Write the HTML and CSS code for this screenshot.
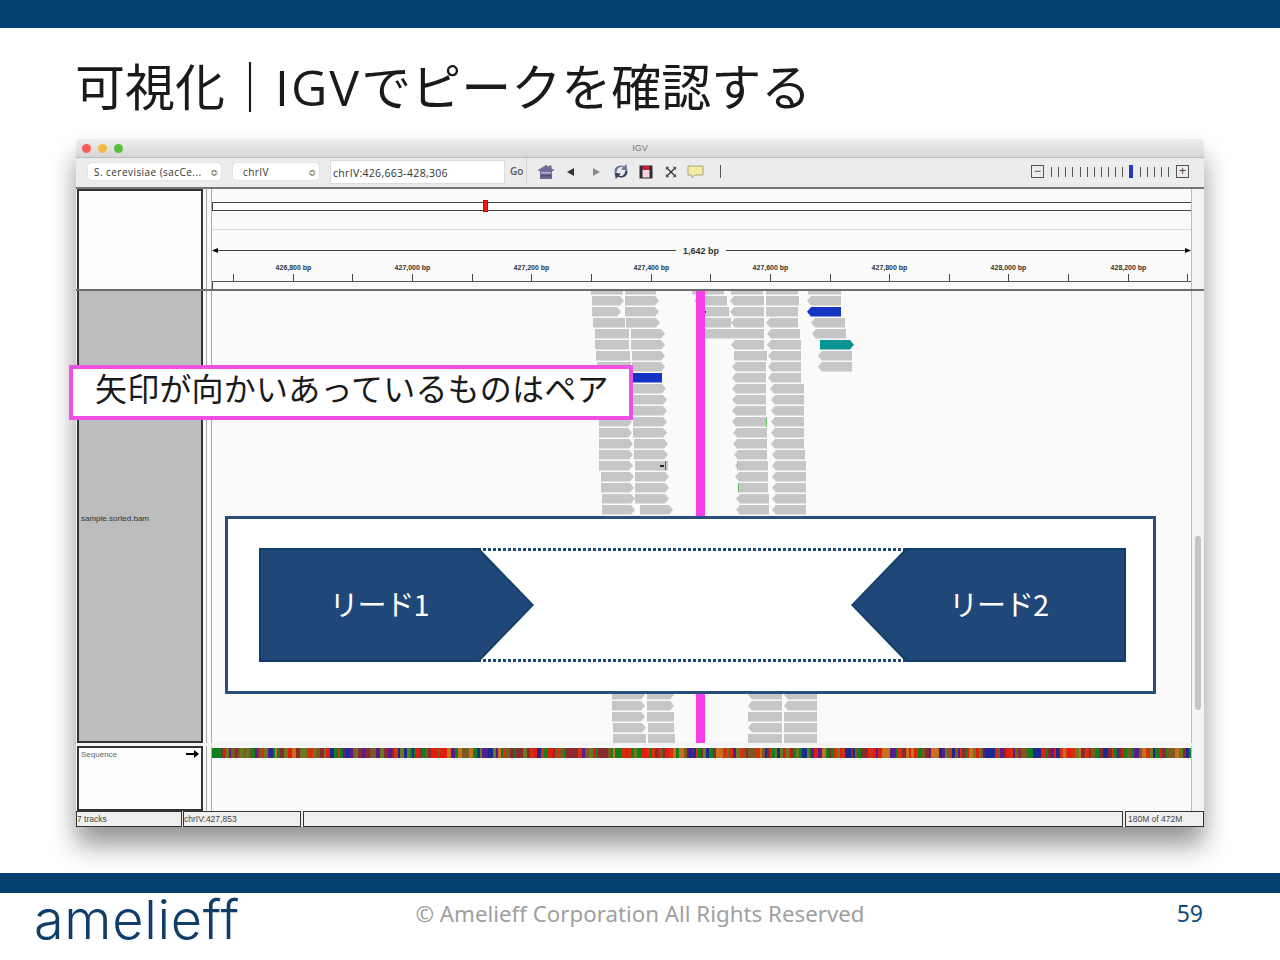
FILE: index.html
```html
<!DOCTYPE html>
<html lang="ja">
<head>
    <meta charset="UTF-8">
    <meta name="viewport" content="width=device-width, initial-scale=1.0">
    <title>可視化｜IGVでピークを確認する</title>
    <link rel="stylesheet" href="styles.css">
</head>
<body>

<div class="slide">
    <div class="top-bar"></div>
    <h1 class="slide-title">可視化｜<span class="title-latin">IGV</span>でピークを確認する</h1>

    <div class="igv-window">
        <div class="titlebar">
            <div class="lights">
                <span class="light red"></span>
                <span class="light amber"></span>
                <span class="light green"></span>
            </div>
            <span class="titlebar-name">IGV</span>
        </div>

        <div class="toolbar">
            <div class="combo combo-genome"><span>S. cerevisiae (sacCe...</span><span class="combo-arrows">≎</span></div>
            <div class="combo combo-chr"><span>chrIV</span><span class="combo-arrows">≎</span></div>
            <div class="locus">chrIV:426,663-428,306</div>
            <span class="go">Go</span>
            <div class="tool-icons">
                <span class="tool"><svg width="18" height="16" viewBox="0 0 18 16"><path d="M9 1 1 6v1h2v8h12V7h2V6z" fill="#6d6a96"/><rect x="12" y="1.500" width="2.500" height="4" fill="#6d6a96"/><rect x="4" y="8" width="10" height="1.500" fill="#b9b7d2"/><rect x="4" y="11" width="10" height="1.500" fill="#4d4a70"/></svg></span>
                <span class="tool"><svg width="10" height="10" viewBox="0 0 10 10"><path d="M1 5 8 1v8z" fill="#333"/></svg></span>
                <span class="tool"><svg width="10" height="10" viewBox="0 0 10 10"><path d="M9 5 2 1v8z" fill="#8a8a8a"/></svg></span>
                <span class="tool"><svg width="20" height="17" viewBox="0 0 18 16"><path d="M3 9C2 4 7 1 12 3l2-2 1 6-6-1 2-2C8 3 5 5 5 9z" fill="#6a7a9c"/><path d="M15 7c1 5-4 8-9 6l-2 2-1-6 6 1-2 2c3 1 6-1 6-5z" fill="#39435c"/></svg></span>
                <span class="tool"><svg width="14" height="14" viewBox="0 0 14 14"><rect x="1" y="1" width="12" height="12" fill="#f3cfe0" stroke="#2c2c34"/><rect x="1" y="1" width="12" height="4" fill="#c8202c"/><rect x="1" y="1" width="2.500" height="12" fill="#2c2c34"/><rect x="10.500" y="1" width="2.500" height="12" fill="#2c2c34"/></svg></span>
                <span class="tool"><svg width="12" height="12" viewBox="0 0 14 14"><path d="M2 2 12 12M12 2 2 12" stroke="#333" stroke-width="1.500"/><path d="M1 1h4L1 5zM13 1H9l4 4zM1 13h4l-4-4zM13 13H9l4-4z" fill="#555"/></svg></span>
                <span class="tool"><svg width="17" height="14" viewBox="0 0 17 14"><path d="M1 1h15v9H8l-3 3v-3H1z" fill="#f6e9a6" stroke="#a8a47c"/></svg></span>
                <span class="tool"><span class="tool-sep"></span></span>
            </div>
            <div class="zoom-widget">
                <span class="zoom-box">−</span>
                <div class="zoom-ticks" id="zoomTicks"></div>
                <span class="zoom-box">+</span>
            </div>
        </div>

        <div class="igv-main">
            <div class="row row-header">
                <div class="name-panel"></div>
                <div class="splitter"></div>
                <div class="data-panel">
                    <svg id="ruler" class="fill-svg" width="979" height="100" viewBox="0 0 979 100"></svg>
                </div>
                <div class="scroller"></div>
            </div>

            <div class="row row-tracks">
                <div class="name-panel name-gray"><span class="bam-label">sample.sorted.bam</span></div>
                <div class="splitter"></div>
                <div class="data-panel">
                    <svg id="reads" class="fill-svg" width="979" height="452" viewBox="212 291 979 452"></svg>
                </div>
                <div class="scroller"><div class="scroll-thumb"></div></div>
            </div>

            <div class="row row-seq">
                <div class="name-panel">
                    <span class="seq-label">Sequence</span>
                    <svg class="seq-arrow" width="13" height="8" viewBox="0 0 13 8"><path d="M0 3h8V0l5 4-5 4V5H0z" fill="#000"/></svg>
                </div>
                <div class="splitter"></div>
                <div class="data-panel">
                    <svg id="sequence" class="seq-strip" width="979" height="10" viewBox="0 0 979 10"></svg>
                </div>
                <div class="scroller"></div>
            </div>
        </div>

        <div class="statusbar">
            <div class="status-cell cell-tracks">7 tracks</div>
            <div class="status-cell cell-locus">chrIV:427,853</div>
            <div class="status-cell cell-fill"></div>
            <div class="status-cell cell-mem">180M of 472M</div>
        </div>
    </div>

    <div class="footer-bar"></div>
    <div class="footer">
        <div class="logo">amelieff</div>
        <div class="copyright">© Amelieff Corporation All Rights Reserved</div>
        <div class="page-no">59</div>
    </div>

    <div class="callout">矢印が向かいあっているものはペア</div>

    <div class="pair-box">
        <div class="pair-line pair-line-top"></div>
        <div class="pair-line pair-line-bottom"></div>
        <div class="read-arrow read-forward">リード1</div>
        <div class="read-arrow read-reverse">リード2</div>
    </div>
</div>

<script src="app.js"></script>
</body>
</html>
```

FILE: styles.css
```css
* {
    box-sizing: border-box;
}
body {
    margin: 0;
    background-color: #fff;
    font-family: "Noto Sans CJK JP", "Liberation Sans", sans-serif;
}
.slide {
    position: relative;
    width: 1280px;
    height: 960px;
    overflow: hidden;
    display: flex;
    flex-direction: column;
}
.top-bar {
    height: 28px;
    background-color: #03406f;
}
.slide-title {
    height: 111px;
    margin: 0;
    padding: 25px 0 0 75px;
    font-size: 50px;
    font-weight: 400;
    line-height: 62px;
    color: #1a1a1a;
    white-space: nowrap;
}
.title-latin {
    font-family: "Open Sans", sans-serif;
    font-size: 50px;
    letter-spacing: 2px;
}

/* ventana de IGV */
.igv-window {
    width: 1128px;
    height: 688px;
    margin-left: 76px;
    display: flex;
    flex-direction: column;
    background-color: #f4f4f4;
    border-radius: 5px 5px 0 0;
    box-shadow: 0 18px 26px rgba(0, 0, 0, 0.42);
    font-family: "Liberation Sans", sans-serif;
}
.titlebar {
    height: 19px;
    display: flex;
    align-items: center;
    justify-content: center;
    position: relative;
    background: linear-gradient(#efefef, #d6d6d6);
    border-bottom: 1px solid #bcbcbc;
    border-radius: 5px 5px 0 0;
}
.lights {
    position: absolute;
    left: 6px;
    top: 5px;
    display: flex;
    gap: 7px;
}
.light {
    width: 9px;
    height: 9px;
    border-radius: 50%;
}
.red { background-color: #fb5c58; }
.amber { background-color: #f2b843; }
.green { background-color: #55bf3f; }
.titlebar-name {
    font-size: 9px;
    color: #777;
}
.toolbar {
    height: 31px;
    display: flex;
    align-items: center;
    padding: 0 15px 2px 12px;
    background-color: #ececec;
    border-bottom: 2px solid #757575;
    font-family: "Open Sans", sans-serif;
    font-size: 10px;
    color: #333;
}
.combo {
    height: 17px;
    display: flex;
    align-items: center;
    justify-content: space-between;
    padding: 0 3px 0 6px;
    background-color: #fff;
    border-radius: 3px;
    box-shadow: 0 0 1px #999;
    letter-spacing: 0.450px;
    white-space: nowrap;
}
.combo-genome {
    width: 133px;
}
.combo-chr {
    width: 86px;
    margin-left: 12px;
    padding-left: 10px;
}
.combo-arrows {
    font-size: 10px;
    color: #555;
}
.locus {
    width: 175px;
    height: 24px;
    margin-left: 11px;
    padding-left: 2px;
    line-height: 24px;
    background-color: #fff;
    border: 1px solid #ddd;
    font-size: 10.500px;
    letter-spacing: 0.300px;
    white-space: nowrap;
}
.go {
    width: 22px;
    padding-left: 5px;
    border-right: 1px solid #d4d4d4;
    line-height: 27px;
    font-weight: 600;
    color: #555;
}
.tool-icons {
    display: flex;
    align-items: center;
    margin-left: 6px;
}
.tool {
    width: 25px;
    display: flex;
    justify-content: center;
}
.tool-sep {
    width: 1px;
    height: 13px;
    background-color: #555;
}
.zoom-widget {
    margin-left: auto;
    display: flex;
    align-items: center;
    gap: 7px;
}
.zoom-box {
    width: 13px;
    height: 13px;
    border: 1px solid #555;
    font-family: "Liberation Sans", sans-serif;
    font-size: 12px;
    line-height: 10px;
    text-align: center;
    color: #444;
}
.zoom-ticks {
    display: flex;
    align-items: center;
    width: 118px;
    justify-content: space-between;
}
.zoom-tick {
    width: 1px;
    height: 10px;
    background-color: #555;
}
.zoom-thumb {
    width: 4px;
    height: 13px;
    background-color: #2437c4;
}

.igv-main {
    flex: 1;
    display: flex;
    flex-direction: column;
    background-color: #f4f4f4;
}
.row {
    display: flex;
}
.row-header {
    height: 102px;
    border-bottom: 2px solid #6e6e6e;
}
.row-tracks {
    height: 452px;
    margin-bottom: 3px;
}
.row-seq {
    height: 65px;
}
.name-panel {
    position: relative;
    width: 126px;
    margin-left: 1px;
    background-color: #fdfdfd;
    border: 2px solid #333;
}
.row-header .name-panel {
    border-bottom: none;
}
.name-gray {
    background-color: #bdbdbd;
    border-top: none;
}
.bam-label {
    position: absolute;
    left: 2px;
    top: 223px;
    font-size: 8px;
    color: #333;
}
.seq-label {
    position: absolute;
    left: 2px;
    top: 2px;
    font-size: 8px;
    color: #666;
}
.seq-arrow {
    position: absolute;
    right: 2px;
    top: 2px;
}
.splitter {
    width: 9px;
    background-color: #fafafa;
    background-image: linear-gradient(#aaa, #aaa);
    background-size: 1px 100%;
    background-position: 3px 0;
    background-repeat: no-repeat;
    border-right: 1px solid #aaa;
}
.data-panel {
    width: 979px;
    background-color: #fafafa;
    overflow: hidden;
}
.fill-svg {
    display: block;
}
.seq-strip {
    display: block;
    margin-top: 2px;
}
.scroller {
    width: 13px;
    padding: 0 3px;
    background-color: #f4f4f4;
    border-left: 1px solid #bbb;
}
.scroll-thumb {
    width: 6px;
    height: 174px;
    margin-top: 245px;
    border-radius: 3px;
    background-color: #c4c4c4;
}
.statusbar {
    height: 16px;
    display: flex;
    background-color: #f0f0f0;
    font-size: 8.500px;
    line-height: 14px;
    color: #444;
}
.status-cell {
    height: 16px;
    border: 1px solid #333;
    white-space: nowrap;
}
.cell-tracks { width: 106px; }
.cell-locus { width: 118px; margin-left: 1px; }
.cell-fill { width: 820px; margin-left: 2px; }
.cell-mem { width: 79px; margin-left: 2px; padding-left: 2px; }

/* pie */
.footer-bar {
    height: 20px;
    margin-top: 46px;
    background-color: #03406f;
}
.footer {
    flex: 1;
    display: grid;
    grid-template-columns: 1fr auto 1fr;
    align-items: start;
}
.logo {
    padding-left: 34px;
    font-family: Inter, sans-serif;
    font-size: 54px;
    font-weight: 300;
    line-height: 54px;
    letter-spacing: 0.700px;
    color: #0f3f68;
}
.copyright {
    padding-top: 6px;
    font-family: "Noto Sans", sans-serif;
    font-size: 22.300px;
    line-height: 29px;
    color: #a0a0a0;
}
.page-no {
    padding: 6px 77px 0 0;
    font-family: "Noto Sans", sans-serif;
    font-size: 23px;
    line-height: 28px;
    text-align: right;
    color: #0f4c7c;
}

/* superpuestos */
.callout {
    position: absolute;
    left: 69px;
    top: 365px;
    width: 564px;
    height: 55px;
    padding-left: 22px;
    background-color: #fff;
    border: 4px solid #ee50e6;
    font-size: 32px;
    font-weight: 400;
    line-height: 36px;
    letter-spacing: 0.200px;
    color: #1a1a1a;
    white-space: nowrap;
}
.pair-box {
    position: absolute;
    left: 225px;
    top: 516px;
    width: 931px;
    height: 178px;
    background-color: #fff;
    border: 3px solid #2a4e7c;
}
.pair-line {
    position: absolute;
    left: 250px;
    width: 430px;
    height: 3px;
    background-image: repeating-linear-gradient(90deg, #1f4778 0 3px, transparent 3px 5px);
}
.pair-line-top { top: 29px; }
.pair-line-bottom { top: 140px; }
.read-arrow {
    position: absolute;
    top: 29px;
    width: 275px;
    height: 114px;
    background-color: #0f3f68;
    font-size: 29px;
    font-weight: 400;
    line-height: 110px;
    letter-spacing: -1px;
    text-align: center;
    color: #fff;
}
.read-arrow::before {
    content: "";
    position: absolute;
    inset: 2px;
    z-index: -1;
    background-color: #1f4778;
}
.read-forward {
    left: 31px;
    padding-right: 35px;
}
.read-forward,
.read-forward::before {
    clip-path: polygon(0 0, 80% 0, 100% 50%, 80% 100%, 0 100%);
}
.read-reverse {
    left: 623px;
    padding-left: 20px;
}
.read-reverse,
.read-reverse::before {
    clip-path: polygon(20% 0, 100% 0, 100% 100%, 20% 100%, 0 50%);
}
```

FILE: app.js
```js
const SVG_NS = "http://www.w3.org/2000/svg";

function addSvg(parent, tag, attrs, text) {
    const el = document.createElementNS(SVG_NS, tag);
    for (const key in attrs) {
        el.setAttribute(key, attrs[key]);
    }
    if (text) el.textContent = text;
    parent.appendChild(el);
    return el;
}

function drawZoomTicks() {
    const box = document.getElementById("zoomTicks");
    for (let i = 0; i < 17; i++) {
        const tick = document.createElement("span");
        tick.className = i === 11 ? "zoom-thumb" : "zoom-tick";
        box.appendChild(tick);
    }
}

function drawRuler() {
    const svg = document.getElementById("ruler");
    const dark = "#444";
    // ideograma
    addSvg(svg, "rect", { x: 0.500, y: 13.500, width: 979, height: 8, fill: "#fff", stroke: dark, "stroke-width": 1 });
    addSvg(svg, "rect", { x: 271.500, y: 11.500, width: 4, height: 11, fill: "#f01818", stroke: "#b01010" });
    addSvg(svg, "line", { x1: 0, y1: 40.500, x2: 979, y2: 40.500, stroke: "#ddd" });
    // escala
    addSvg(svg, "line", { x1: 2, y1: 61.500, x2: 978, y2: 61.500, stroke: dark });
    addSvg(svg, "path", { d: "M0 61.500l6-2.500v5zM979 61.500l-6-2.500v5z", fill: "#000" });
    addSvg(svg, "rect", { x: 464, y: 55, width: 50, height: 12, fill: "#fafafa" });
    addSvg(svg, "text", { x: 489, y: 64.500, "text-anchor": "middle", "font-size": 9, "font-weight": "bold", fill: "#333" }, "1,642 bp");
    addSvg(svg, "line", { x1: 0, y1: 92.500, x2: 979, y2: 92.500, stroke: "#555" });
    addSvg(svg, "line", { x1: 0.500, y1: 92, x2: 0.500, y2: 100, stroke: "#555" });

    const labels = ["426,800", "427,000", "427,200", "427,400", "427,600", "427,800", "428,000", "428,200"];
    for (let i = 0; i < 17; i++) {
        const x = Math.round(22 + i * 59.65) - 0.500;
        addSvg(svg, "line", { x1: x, y1: 85, x2: x, y2: 92, stroke: dark });
        if (i % 2 === 1) {
            addSvg(svg, "text", { x: x, y: 80.500, "text-anchor": "middle", "font-size": 7, "font-weight": "bold", fill: "#333" }, labels[(i - 1) / 2] + " bp");
        }
    }
}

// Lecturas por fila: [inicio, fin, direccion, color opcional]
const READ_ROWS = [
    [[591, 623, "n"], [625, 656, "n"], [692, 724, "n"], [731, 763, "n"], [766, 798, "n"], [808, 841, "n"]],
    [[592, 624, "r"], [625, 659, "r"], [694, 727, "l"], [730, 764, "l"], [766, 799, "n"], [807, 841, "l"]],
    [[592, 621, "r"], [625, 659, "r"], [704, 729, "n"], [730, 764, "l"], [766, 798, "n"], [807, 841, "l", "#1733c4"]],
    [[593, 625, "n"], [626, 660, "r"], [705, 731, "n"], [731, 764, "l"], [766, 798, "l"], [811, 845, "l"]],
    [[595, 629, "n"], [631, 665, "r"], [705, 732, "n"], [732, 764, "n"], [767, 800, "l"], [812, 846, "l"]],
    [[595, 629, "n"], [631, 665, "r"], [731, 764, "l"], [767, 801, "l"], [820, 854, "r", "#0a9494"]],
    [[596, 630, "n"], [632, 665, "r"], [734, 767, "n"], [768, 801, "l"], [818, 852, "l"]],
    [[597, 631, "n"], [632, 665, "r"], [732, 766, "l"], [768, 801, "l"], [818, 852, "l"]],
    [[598, 632, "n"], [633, 662, "n", "#1733c4"], [732, 766, "l"], [768, 801, "l"]],
    [[598, 632, "n"], [633, 666, "r"], [732, 766, "l"], [770, 804, "l"]],
    [[599, 633, "n"], [633, 667, "r"], [732, 766, "l"], [771, 804, "l"]],
    [[599, 633, "n"], [633, 667, "r"], [732, 766, "l"], [771, 804, "l"]],
    [[599, 632, "r"], [633, 667, "r"], [732, 767, "l"], [771, 804, "l"]],
    [[599, 632, "r"], [633, 667, "r"], [733, 767, "l"], [771, 804, "l"]],
    [[599, 633, "r"], [634, 668, "r"], [733, 767, "l"], [771, 804, "l"]],
    [[599, 633, "r"], [634, 668, "r"], [734, 767, "l"], [772, 805, "l"]],
    [[599, 633, "r"], [635, 668, "n"], [735, 768, "l"], [772, 806, "l"]],
    [[601, 634, "r"], [635, 669, "r"], [735, 768, "l"], [772, 806, "l"]],
    [[601, 634, "r"], [635, 669, "r"], [738, 768, "n"], [772, 806, "l"]],
    [[602, 635, "r"], [635, 669, "r"], [736, 769, "l"], [772, 806, "l"]],
    [[602, 635, "r"], [640, 673, "r"], [736, 769, "l"], [772, 806, "l"]]
];

const BOTTOM_ROWS = [
    [[612, 645, "r"], [647, 674, "r"], [748, 782, "l"], [784, 817, "l"]],
    [[612, 645, "r"], [647, 674, "r"], [748, 782, "l"], [784, 817, "l"]],
    [[612, 645, "r"], [647, 674, "n"], [748, 782, "n"], [784, 817, "n"]],
    [[613, 646, "r"], [648, 674, "n"], [748, 782, "l"], [784, 817, "n"]],
    [[613, 646, "n"], [648, 675, "n"], [748, 782, "n"], [784, 817, "n"]]
];

function readPoints(x1, x2, y, dir) {
    const y2 = y + 9.500;
    const mid = y + 4.750;
    if (dir === "r") return `${x1},${y} ${x2 - 4},${y} ${x2},${mid} ${x2 - 4},${y2} ${x1},${y2}`;
    if (dir === "l") return `${x1 + 4},${y} ${x2},${y} ${x2},${y2} ${x1 + 4},${y2} ${x1},${mid}`;
    return `${x1},${y} ${x2},${y} ${x2},${y2} ${x1},${y2}`;
}

function drawReadRows(svg, rows, startY) {
    rows.forEach((row, i) => {
        row.forEach(read => {
            addSvg(svg, "polygon", {
                points: readPoints(read[0], read[1], startY + i * 11, read[2]),
                fill: read[3] || "#c6c6c6"
            });
        });
    });
}

function drawReads() {
    const svg = document.getElementById("reads");
    drawReadRows(svg, READ_ROWS, 285);
    drawReadRows(svg, BOTTOM_ROWS, 690);

    // mismatches
    const marks = [
        [766, 418, 1, 9, "#5fc85f"], [660, 465, 4, 2, "#222"], [665, 461, 1, 9, "#5b5bc8"],
        [737, 461, 1, 9, "#7fd87f"], [738, 483, 1, 9, "#5fc85f"], [704, 311, 2, 2, "#222"]
    ];
    marks.forEach(m => {
        addSvg(svg, "rect", { x: m[0], y: m[1], width: m[2], height: m[3], fill: m[4] });
    });

    // linea vertical magenta
    addSvg(svg, "rect", { x: 696, y: 291, width: 9, height: 452, fill: "#f53fe8" });
}

function drawSequence() {
    const svg = document.getElementById("sequence");
    const colors = ["#10801c", "#1a2a90", "#c8701a", "#e41c10", "#7a5a20", "#5a1a90", "#d8300c", "#6a7a20", "#8a2a30"];
    let seed = 2024;
    let x = 0;
    while (x < 979) {
        seed = (seed * 1664525 + 1013904223) % 4294967296;
        const color = colors[Math.floor(seed / 65536) % colors.length];
        const w = 2 + Math.floor(seed / 16777216) % 3;
        addSvg(svg, "rect", { x: x, y: 0, width: w, height: 10, fill: color });
        x += w;
    }
}

drawZoomTicks();
drawRuler();
drawReads();
drawSequence();
```
